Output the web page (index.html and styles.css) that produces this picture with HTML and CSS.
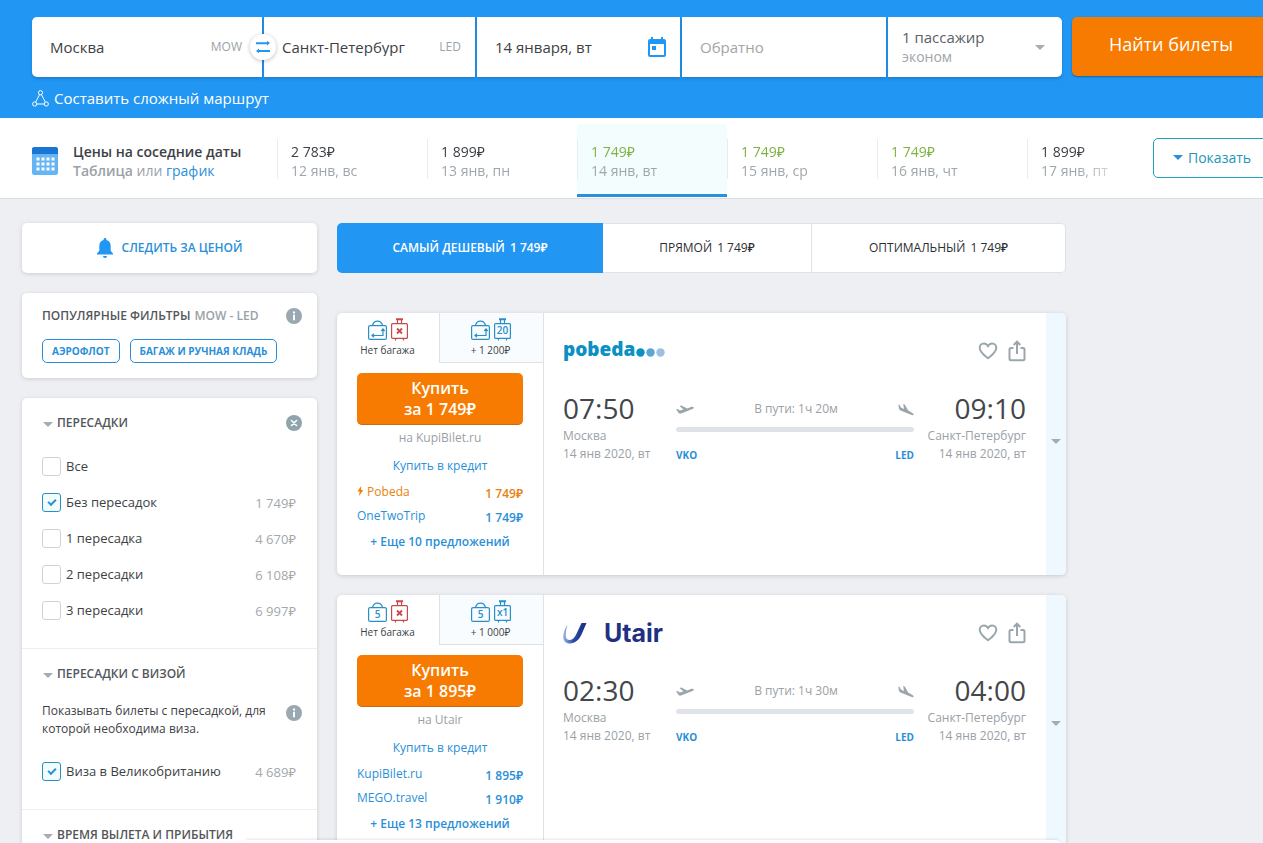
FILE: index.html
```html
<!DOCTYPE html>
<html lang="ru">
<head>
<meta charset="utf-8">
<title>Москва — Санкт-Петербург</title>
<link rel="stylesheet" href="styles.css">
</head>
<body>
<svg class="sprite" aria-hidden="true">
  <symbol id="i-info" viewBox="0 0 16 16"><circle cx="8" cy="8" r="8" fill="#9aa9b1"/><path d="M8 3.600v1.900M8 6.700v5.600" stroke="#fff" stroke-width="2"/></symbol>
  <symbol id="i-clear" viewBox="0 0 16 16"><circle cx="8" cy="8" r="8" fill="#90a4ae"/><path d="M5.500 5.500l5 5M10.500 5.500l-5 5" stroke="#fff" stroke-width="1.600" stroke-linecap="round"/></symbol>
  <symbol id="i-bag" viewBox="0 0 19 20"><rect x="0.6" y="5.600" width="17.800" height="13.800" rx="1.500"/><path d="M4.500 5.500c.6-2.800 2.400-4.300 5-4.300s4.400 1.500 5 4.300"/></symbol>
  <symbol id="i-arrows" viewBox="0 0 19 20"><path d="M4 15.500h11v-6M6 13.800l-2 1.700 2 1.700M13.300 11l1.700-2 1.700 2"/></symbol>
  <symbol id="i-case" viewBox="0 0 17 23"><rect x="0.6" y="5.600" width="15.800" height="14.800" rx="1"/><path d="M6.500 5.500v-4h4v4M4.500 20.500v2M12.500 20.500v2"/><path d="M5 1.200h7" stroke-width="2"/></symbol>
  <symbol id="i-heart" viewBox="0 0 20 20"><path d="M10 17.300C5 13.500 1.700 10.500 1.700 6.700c0-2.500 1.800-4.300 4.100-4.300 1.700 0 3.200 1 4.200 2.700 1-1.700 2.500-2.700 4.200-2.700 2.300 0 4.100 1.800 4.100 4.300 0 3.800-3.300 6.800-8.300 10.600z"/></symbol>
  <symbol id="i-share" viewBox="0 0 18 22"><path d="M5.500 8H3C2 8 1.500 8.500 1.500 9.500v9.300c0 1 .5 1.500 1.500 1.500h12c1 0 1.500-.5 1.500-1.500V9.500C16.500 8.500 16 8 15 8h-2.500M9 14V2M5.700 5L9 1.700 12.300 5"/></symbol>
  <symbol id="i-depart" viewBox="0 0 18 10"><path d="M.2 4.300l1.500-.4 2.200 1.500 3.500-1L3.500.9l1.700-.5 6 3L15.600 1.800c1-.3 2 .1 2.100.6.200.6-.3 1.100-1.200 1.500L5 8.500c-1 .3-1.800.1-2.400-.5z"/></symbol>
  <symbol id="i-arrive" viewBox="0 0 16 14"><path d="M.4 1.400l1.300.5 1.200 2.500 3 1.500L5.300.8l1.600.9 3.300 5.900 4.200 2.300c.9.500 1.400 1.200 1.200 1.800-.3.500-1 .6-1.900.2L2.500 7.400C1.300 6.800.9 6 .8 5.100z"/></symbol>
</svg>

<div class="page">
  <header class="top">
    <form class="search">
      <div class="fields">
        <div class="field">
          <input type="text" aria-label="Откуда" value="Москва">
          <span class="code">MOW</span>
          <button class="swap" type="button" aria-label="Поменять местами">
            <svg width="14" height="14" viewBox="0 0 14 14" fill="#2196f3"><path d="M0 2.200h11V.7L14 3.100 11 5.500V4.200H0zM14 9.900H3V8.500L0 10.900l3 2.400v-1.400h11z"/></svg>
          </button>
        </div>
        <div class="field">
          <input type="text" aria-label="Куда" value="Санкт-Петербург">
          <span class="code">LED</span>
        </div>
        <div class="field">
          <input type="text" aria-label="Туда" value="14 января, вт">
          <svg width="18" height="20" viewBox="0 0 18 20"><path fill="#2196f3" fill-rule="evenodd" d="M3 0h2v2h8V0h2v2h1a2 2 0 0 1 2 2v14a2 2 0 0 1-2 2H2a2 2 0 0 1-2-2V4a2 2 0 0 1 2-2h1zM2 7v11h14V7zM4 9h4v4H4z"/></svg>
        </div>
        <div class="field">
          <input type="text" aria-label="Обратно" placeholder="Обратно">
        </div>
        <button class="field passengers" type="button">
          <span>1 пассажир<small>эконом</small></span>
          <i class="caret"></i>
        </button>
      </div>
      <button class="find" type="submit">Найти билеты</button>
    </form>
    <a class="route" href="#">
      <svg width="17" height="17" viewBox="0 0 17 17" fill="none" stroke="#fff"><circle cx="8.500" cy="2.700" r="2.100"/><circle cx="2.700" cy="14" r="2.100"/><circle cx="14.300" cy="14" r="2.100"/><path d="M7.500 4.700L3.700 12M9.500 4.700l3.800 7.300M4.900 14h7.200"/></svg>
      Составить сложный маршрут
    </a>
  </header>

  <section class="strip">
    <div class="near">
      <svg width="26" height="28" viewBox="0 0 26 28"><rect width="26" height="28" rx="2.500" fill="#64b5f6"/><path d="M0 7V2.500A2.500 2.500 0 0 1 2.500 0h21A2.500 2.500 0 0 1 26 2.500V7z" fill="#1976d2"/><path d="M4.500 12h18M4.500 17h18M4.500 22h18" stroke="#fff" stroke-width="3" stroke-dasharray="3 2"/></svg>
      <div>
        <b>Цены на соседние даты</b>
        <p><b>Таблица</b> или <a href="#">график</a></p>
      </div>
    </div>
    <div class="dates">
      <button type="button">2 783₽<span>12 янв, вс</span></button>
      <button type="button">1 899₽<span>13 янв, пн</span></button>
      <button type="button" class="low current">1 749₽<span>14 янв, вт</span></button>
      <button type="button" class="low">1 749₽<span>15 янв, ср</span></button>
      <button type="button" class="low">1 749₽<span>16 янв, чт</span></button>
      <button type="button">1 899₽<span>17 янв, пт</span></button>
    </div>
    <button class="show" type="button"><i class="caret"></i>Показать</button>
  </section>

  <main class="main">
    <aside class="side">
      <button class="panel follow" type="button">
        <svg width="16" height="20" viewBox="0 0 16 20" fill="#2196f3"><path d="M8 0c.8 0 1.400.6 1.400 1.400v.5c2.700.6 4.300 2.900 4.300 5.800v5l2.300 2.900v1H0v-1l2.300-2.900v-5c0-2.900 1.600-5.200 4.300-5.800v-.5C6.600.6 7.200 0 8 0zM6 18h4c0 1.100-.9 2-2 2s-2-.9-2-2z"/></svg>
        Следить за ценой
      </button>

      <section class="panel popular">
        <div class="line"><h2>Популярные фильтры <span>MOW - LED</span></h2><svg class="mark"><use href="#i-info"/></svg></div>
        <div class="chips"><button type="button">Аэрофлот</button><button type="button">Багаж и ручная кладь</button></div>
      </section>

      <div class="panel filters">
        <section>
          <div class="line"><h2><i class="caret"></i>Пересадки</h2><svg class="mark"><use href="#i-clear"/></svg></div>
          <div class="options">
            <label><input type="checkbox">Все</label>
            <label><input type="checkbox" checked>Без пересадок<span>1 749₽</span></label>
            <label><input type="checkbox">1 пересадка<span>4 670₽</span></label>
            <label><input type="checkbox">2 пересадки<span>6 108₽</span></label>
            <label><input type="checkbox">3 пересадки<span>6 997₽</span></label>
          </div>
        </section>
        <section>
          <div class="line"><h2><i class="caret"></i>Пересадки с визой</h2></div>
          <div class="note"><p>Показывать билеты с пересадкой, для которой необходима виза.</p><svg class="mark"><use href="#i-info"/></svg></div>
          <div class="options">
            <label><input type="checkbox" checked>Виза в Великобританию<span>4 689₽</span></label>
          </div>
        </section>
        <section>
          <div class="line"><h2><i class="caret"></i>Время вылета и прибытия</h2></div>
        </section>
      </div>
    </aside>

    <div class="results">
      <div class="sorts">
        <button type="button" class="on">Самый дешевый <span>1 749₽</span></button>
        <button type="button">Прямой <span>1 749₽</span></button>
        <button type="button">Оптимальный <span>1 749₽</span></button>
      </div>

      <article class="ticket">
        <div class="buy">
          <div class="bags">
            <button type="button" class="on">
              <span class="icons">
                <svg class="bag"><use href="#i-bag"/><use href="#i-arrows"/></svg>
                <svg class="case none"><use href="#i-case"/><path d="M6 10.500l5 5M11 10.500l-5 5" stroke-width="1.800"/></svg>
              </span>Нет багажа
            </button>
            <button type="button">
              <span class="icons">
                <svg class="bag"><use href="#i-bag"/><use href="#i-arrows"/></svg>
                <svg class="case"><use href="#i-case"/><text x="8.500" y="16">20</text></svg>
              </span>+ 1 200₽
            </button>
          </div>
          <div class="offers">
            <button class="order" type="button">Купить<br>за 1 749₽</button>
            <p class="seller">на KupiBilet.ru</p>
            <a class="credit" href="#">Купить в кредит</a>
            <a class="offer own" href="#"><span><svg width="7" height="10" viewBox="0 0 7 10" fill="#f57c00"><path d="M4.200 0L.5 5.600h2.200L2 10l4.300-6H4z"/></svg> Pobeda</span><b>1 749₽</b></a>
            <a class="offer" href="#"><span>OneTwoTrip</span><b>1 749₽</b></a>
            <a class="more" href="#">+ Еще 10 предложений</a>
          </div>
        </div>
        <div class="flight">
          <div class="head">
            <div class="logo pobeda">pobeda<svg width="29" height="9" viewBox="0 0 29 9"><circle cx="4.500" cy="4.500" r="4.200" fill="#0a90c4"/><circle cx="14.500" cy="4.500" r="4.200" fill="#5ba6d3"/><circle cx="24.500" cy="4.500" r="4.200" fill="#9cc0e4"/></svg></div>
            <div class="tools">
              <button type="button" aria-label="В избранное"><svg width="20" height="20"><use href="#i-heart"/></svg></button>
              <button type="button" aria-label="Поделиться"><svg width="18" height="22"><use href="#i-share"/></svg></button>
            </div>
          </div>
          <div class="leg">
            <div class="stop"><time>07:50</time><p>Москва</p><p>14 янв 2020, вт</p></div>
            <div class="path">
              <div class="way"><svg width="18" height="10"><use href="#i-depart"/></svg><span>В пути: 1ч 20м</span><svg width="16" height="14"><use href="#i-arrive"/></svg></div>
              <div class="bar"></div>
              <div class="codes"><span>VKO</span><span>LED</span></div>
            </div>
            <div class="stop end"><time>09:10</time><p>Санкт-Петербург</p><p>14 янв 2020, вт</p></div>
          </div>
        </div>
        <button class="open" type="button" aria-label="Подробнее"><i class="caret"></i></button>
      </article>

      <article class="ticket">
        <div class="buy">
          <div class="bags">
            <button type="button" class="on">
              <span class="icons">
                <svg class="bag"><use href="#i-bag"/><text x="9.500" y="16">5</text></svg>
                <svg class="case none"><use href="#i-case"/><path d="M6 10.500l5 5M11 10.500l-5 5" stroke-width="1.800"/></svg>
              </span>Нет багажа
            </button>
            <button type="button">
              <span class="icons">
                <svg class="bag"><use href="#i-bag"/><text x="9.500" y="16">5</text></svg>
                <svg class="case"><use href="#i-case"/><text x="8.500" y="16">x1</text></svg>
              </span>+ 1 000₽
            </button>
          </div>
          <div class="offers">
            <button class="order" type="button">Купить<br>за 1 895₽</button>
            <p class="seller">на Utair</p>
            <a class="credit" href="#">Купить в кредит</a>
            <a class="offer" href="#"><span>KupiBilet.ru</span><b>1 895₽</b></a>
            <a class="offer" href="#"><span>MEGO.travel</span><b>1 910₽</b></a>
            <a class="more" href="#">+ Еще 13 предложений</a>
          </div>
        </div>
        <div class="flight">
          <div class="head">
            <div class="logo utair">
              <svg width="24" height="22" viewBox="0 0 24 22"><defs><linearGradient id="u" x1="0" y1="0" x2="1" y2="0"><stop offset="0" stop-color="#9cb4e4"/><stop offset=".45" stop-color="#2b4ba8"/><stop offset="1" stop-color="#1c2c7c"/></linearGradient></defs><path fill="url(#u)" d="M4.500 3C1 8 0 13 .3 16c.4 4 3.200 5.500 6.700 5.500 5 0 9-3.500 11.500-9L23.500 1h-5l-4.900 10.500c-1.900 4.300-3.800 6.500-6.900 6.500-2.200 0-3.600-1-3.900-3.500C2.500 11.500 3 7.500 4.500 3z"/></svg>
              Utair
            </div>
            <div class="tools">
              <button type="button" aria-label="В избранное"><svg width="20" height="20"><use href="#i-heart"/></svg></button>
              <button type="button" aria-label="Поделиться"><svg width="18" height="22"><use href="#i-share"/></svg></button>
            </div>
          </div>
          <div class="leg">
            <div class="stop"><time>02:30</time><p>Москва</p><p>14 янв 2020, вт</p></div>
            <div class="path">
              <div class="way"><svg width="18" height="10"><use href="#i-depart"/></svg><span>В пути: 1ч 30м</span><svg width="16" height="14"><use href="#i-arrive"/></svg></div>
              <div class="bar"></div>
              <div class="codes"><span>VKO</span><span>LED</span></div>
            </div>
            <div class="stop end"><time>04:00</time><p>Санкт-Петербург</p><p>14 янв 2020, вт</p></div>
          </div>
        </div>
        <button class="open" type="button" aria-label="Подробнее"><i class="caret"></i></button>
      </article>
    </div>
  </main>
  <div class="drawer"></div>
</div>
</body>
</html>
```

FILE: styles.css
```css
* { box-sizing: border-box; }

body {
  margin: 0;
  height: 100vh;
  overflow: hidden;
  background: #eeeff2;
  color: #3d4146;
  font: 12px/18px "Open Sans", "Noto Sans", sans-serif;
}

h2, p { margin: 0; font-size: inherit; font-weight: inherit; }
a { color: #2a8fd8; text-decoration: none; }
button, input { font: inherit; color: inherit; }
button { padding: 0; border: 0; background: none; cursor: pointer; }
svg { flex: none; display: block; }

.sprite { position: absolute; width: 0; height: 0; }
.page { min-width: 1270px; }

.caret {
  flex: none;
  width: 0;
  height: 0;
  border: 5px solid transparent;
  border-bottom-width: 0;
  border-top-color: #a3adb2;
}

/* Search header */
.top { height: 118px; padding: 17px 0 0 32px; background: #2196f3; }
.search { display: flex; gap: 10px; }
.fields {
  flex: 1;
  display: grid;
  grid-template-columns: 230fr 211fr 203fr 204fr 174fr;
  gap: 2px;
  height: 60px;
  font-size: 15px;
}
.field {
  position: relative;
  display: flex;
  align-items: center;
  min-width: 0;
  padding: 0 14px 0 18px;
  background: #fff;
  box-shadow: 0 2px 3px rgba(0, 0, 0, 0.15);
}
.field:first-child { z-index: 1; padding-right: 20px; border-radius: 5px 0 0 5px; }
.field:last-child { border-radius: 0 5px 5px 0; }
.field input { flex: 1; min-width: 0; padding: 0; border: 0; outline: 0; background: none; }
.field input::placeholder { color: #a0a5a9; opacity: 1; }
.code { font-size: 12px; color: #9aa3a8; }
.swap {
  position: absolute;
  right: -14px;
  top: 17px;
  display: grid;
  place-items: center;
  width: 26px;
  height: 26px;
  border-radius: 50%;
  background: #fff;
  box-shadow: 0 1px 4px rgba(0, 0, 0, 0.25);
}
.passengers { justify-content: space-between; padding: 0 17px 0 14px; text-align: left; line-height: 20px; color: #5b6065; }
.passengers small { display: block; font-size: 14px; color: #a0a5a9; }
.find {
  width: 198px;
  height: 59px;
  padding-bottom: 5px;
  border-radius: 5px;
  background: #f77b00;
  box-shadow: 0 1px 2px rgba(0, 0, 0, 0.35);
  color: #fff;
  font-size: 18px;
  font-weight: 500;
}
.route { display: flex; align-items: center; gap: 5px; width: max-content; margin-top: 12px; color: #fff; font-size: 15px; font-weight: 500; }

/* Neighbouring dates */
.strip {
  display: flex;
  align-items: center;
  height: 81px;
  border-bottom: 1px solid #dcdee2;
  background: #fff;
  font-size: 14px;
  line-height: 19px;
}
.near { display: flex; align-items: center; gap: 15px; width: 277px; padding: 5px 0 0 32px; }
.near b { font-weight: 600; }
.near p { color: #9aa1a6; }
.dates {
  flex: 1;
  align-self: stretch;
  display: grid;
  grid-template-columns: repeat(6, 150px);
  overflow: hidden;
  padding: 6px 0 1px;
  -webkit-mask-image: linear-gradient(to left, transparent, #000 60px);
  mask-image: linear-gradient(to left, transparent, #000 60px);
}
.dates button {
  padding: 3px 0 0 14px;
  border-bottom: 3px solid transparent;
  background: linear-gradient(#e9ebed, #e9ebed) 0 50% / 1px 40px no-repeat;
  text-align: left;
}
.dates span { display: block; color: #9fa7ad; }
.dates .low { color: #7cb342; }
.dates .low span { color: #9fa7ad; }
.dates .current { background-color: #f3fdfd; border-bottom-color: #2a8fdd; }
.show {
  display: flex;
  align-items: center;
  gap: 5px;
  width: 117px;
  height: 40px;
  margin-left: 16px;
  padding: 0 0 2px 19px;
  border: 1px solid #22a0b6;
  border-radius: 5px;
  color: #2196b8;
}
.show .caret { border-top-color: #2a8fd8; }

/* Page body */
.main { display: grid; grid-template-columns: 295px 729px; align-items: start; gap: 20px; padding: 24px 22px; }
.side { display: grid; gap: 20px; }
.panel { border-radius: 5px; background: #fff; box-shadow: 0 1px 4px rgba(0, 0, 0, 0.14); }
.follow {
  display: flex;
  align-items: center;
  justify-content: center;
  gap: 9px;
  height: 50px;
  color: #2a8fd8;
  font-weight: 600;
  text-transform: uppercase;
}
.popular { padding: 14px 15px 15px 20px; }
.popular h2 span { color: #9aa1a6; }
.line { display: flex; align-items: center; justify-content: space-between; height: 18px; text-transform: uppercase; font-weight: 600; color: #53575b; }
.line h2 { display: flex; align-items: center; gap: 4px; }
.mark { width: 16px; height: 16px; }
.chips { display: flex; gap: 10px; margin-top: 14px; }
.chips button {
  height: 24px;
  padding: 0 9px;
  border: 1px solid #2a8fd8;
  border-radius: 5px;
  color: #2a8fd8;
  font-size: 10px;
  font-weight: 700;
  text-transform: uppercase;
}
.filters section { padding: 16px 15px 20px 20px; }
.filters section + section { border-top: 1px solid #eceef0; }
.filters .caret { margin: 3px 0 0 1px; }
.options { margin-top: 16px; padding-right: 6px; }
.options label { display: flex; align-items: center; gap: 5px; height: 36px; font-size: 13px; }
.options span { margin: 2px 0 0 auto; color: #a3a8ac; }
.options input {
  appearance: none;
  width: 19px;
  height: 19px;
  margin: 0;
  border: 1px solid #cfd3d6;
  border-radius: 3px;
  display: grid;
  place-items: center;
}
.options input:checked { border-color: #2a8fc4; background: #f1fcfd; }
.options input:checked::before {
  content: "";
  box-sizing: border-box;
  width: 8px;
  height: 5px;
  margin-bottom: 2px;
  border: solid #2a8fd8;
  border-width: 0 0 2px 2px;
  transform: rotate(-45deg);
}
.note { display: flex; justify-content: space-between; align-items: center; margin-top: 19px; }
.note p { max-width: 230px; }
.note .mark { margin-bottom: 14px; }
.note + .options { margin-top: 15px; }

/* Sorting */
.sorts {
  display: grid;
  grid-template-columns: 266fr 209fr 254fr;
  height: 50px;
  margin-bottom: 40px;
  border-radius: 5px;
  overflow: hidden;
  background: #fff;
  box-shadow: inset 0 0 0 1px #dfe2e5;
}
.sorts button { text-transform: uppercase; font-weight: 500; color: #2b2e32; }
.sorts button + button { border-right: 1px solid #dfe2e5; }
.sorts span { margin-left: 2px; }
.sorts .on { background: #2196f3; color: #fff; font-weight: 600; }

/* Tickets */
.ticket {
  display: grid;
  grid-template-columns: 207px 1fr 20px;
  margin-bottom: 20px;
  border-radius: 5px;
  overflow: hidden;
  background: #fff;
  box-shadow: 0 1px 4px rgba(0, 0, 0, 0.16);
}
.buy { border-right: 1px solid #dfe2e5; }
.bags { display: grid; grid-template-columns: 102fr 104fr; height: 50px; }
.bags button {
  display: flex;
  flex-direction: column;
  align-items: center;
  padding: 5px 2px 0 0;
  border: solid #dfe2e5;
  border-width: 0 0 1px 1px;
  background: #f8fcfe;
  font-size: 10px;
  line-height: 18px;
}
.bags .on { border-color: transparent; background: none; }
.icons { display: flex; align-items: flex-end; gap: 4px; height: 23px; fill: none; stroke: #2a8fc8; stroke-width: 1.2; }
.bag { width: 19px; height: 20px; margin-bottom: 1px; }
.case { width: 17px; height: 23px; }
.none { stroke: #c94848; }
.icons text { fill: #2a8fc8; stroke: none; font-size: 10px; font-weight: 600; text-anchor: middle; }
.offers { display: flex; flex-direction: column; padding: 10px 20px 24px; text-align: center; }
.order {
  padding: 5px 0 4px;
  border-radius: 5px;
  border-bottom: 1px solid #c96a14;
  background: #f77b00;
  color: #fff;
  font-size: 16px;
  line-height: 21px;
  font-weight: 600;
}
.seller { margin-top: 4px; color: #9aa1a6; }
.credit { margin: 10px 0 5px; }
.offer { display: flex; justify-content: space-between; line-height: 24px; }
.offer svg { display: inline-block; }
.offer b { padding-top: 2px; font-weight: 600; line-height: 23px; height: 24px; }
.own { color: #e8820f; }
.more { margin-top: 5px; font-weight: 600; }

.flight { padding: 20px 20px 20px 19px; }
.head { display: flex; align-items: center; justify-content: space-between; height: 36px; }
.logo { display: flex; align-items: center; }
.pobeda { gap: 1px; padding-bottom: 4px; color: #0a90c4; font: 800 19px/24px "Open Sans", sans-serif; }
.pobeda svg { margin-top: 6px; }
.utair { gap: 17px; color: #1f3282; font: 700 25px/24px Inter, sans-serif; }
.tools { display: flex; align-items: center; gap: 10px; }
.tools svg { fill: none; stroke: #9aa6ac; stroke-width: 2; }
.leg { display: grid; grid-template-columns: 113px 1fr 112px; margin-top: 23px; color: #9aa1a6; }
.stop time { display: block; margin-bottom: 2px; color: #43464a; font-size: 28px; line-height: 33px; }
.stop p { white-space: nowrap; }
.end { display: flex; flex-direction: column; align-items: flex-end; }
.way { display: flex; align-items: center; justify-content: space-between; height: 34px; fill: #9aa6ac; }
.way svg { margin-top: 2px; }
.bar { height: 5px; margin-top: 1px; border-radius: 3px; background: #dfe3e9; }
.codes { display: flex; justify-content: space-between; margin-top: 14px; color: #2a8fd8; font-size: 10px; font-weight: 700; }
.open { display: grid; place-items: center; padding-bottom: 6px; background: #eff8fe; }

/* Bottom drawer peeking over the page */
.drawer {
  position: fixed;
  left: 245px;
  right: 204px;
  bottom: 0;
  height: 3px;
  border-radius: 6px 6px 0 0;
  background: #fff;
  box-shadow: 0 -1px 3px rgba(0, 0, 0, 0.1);
}
```
